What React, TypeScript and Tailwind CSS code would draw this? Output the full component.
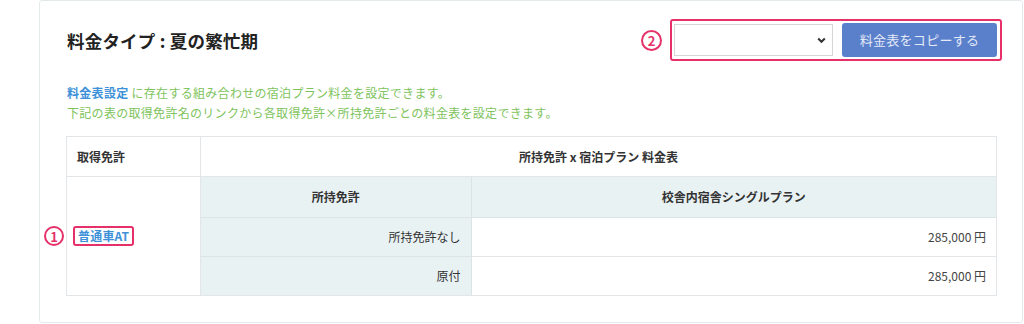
import React from "react";

const font = { fontFamily: '"Noto Sans CJK JP", "Noto Sans", "Liberation Sans", sans-serif' };

export default function App() {
  return (
    <div className="w-[1024px] h-[324px] bg-white overflow-hidden" style={font}>
      <div className="relative ml-[39px] w-[984px] h-[323px] border border-[#e4eaec] rounded-[3px] px-[26px] pt-[18px]">
        {/* header */}
        <div className="flex items-center justify-between h-[42px]">
          <h1 className="text-[17.5px] font-bold text-[#222] mt-[3px] ml-[1px] tracking-[0.2px]">料金タイプ : 夏の繁忙期</h1>
          <div className="flex items-center gap-[8px] -mr-[6px]">
            <span className="flex items-center justify-center w-[21px] h-[21px] rounded-full border-2 border-[#e5306a] text-[#e5306a] text-[13px] font-bold leading-none">2</span>
            <div className="flex items-center gap-[9px] h-[42px] border-2 border-[#e5306a] rounded-[3px] pl-[2px] pr-[3px]">
              <div className="relative w-[159px] h-[32px] border border-[#d6d6d6] bg-white">
                <svg className="absolute right-[6px] top-[12px]" width="9" height="7" viewBox="0 0 9 7">
                  <path d="M1.2 1.5 L4.5 4.8 L7.8 1.5" fill="none" stroke="#333" strokeWidth="2" />
                </svg>
              </div>
              <button className="w-[155px] h-[34px] rounded-[3px] bg-[#5a80cc] text-[13px] text-[#e3e9f6] tracking-[0.3px]">料金表をコピーする</button>
            </div>
          </div>
        </div>

        {/* description */}
        <div className="mt-[22px] text-[12px] leading-[20px] text-[#7ec35c] ml-[1px] tracking-[0.3px]">
          <p><span className="text-[#3d91d8] font-semibold">料金表設定</span> に存在する組み合わせの宿泊プラン料金を設定できます。</p>
          <p>下記の表の取得免許名のリンクから各取得免許×所持免許ごとの料金表を設定できます。</p>
        </div>

        {/* table */}
        <table className="mt-[13px] w-[931px] border-collapse text-[12px] text-[#333]">
          <thead>
            <tr className="h-[40px]">
              <th className="w-[134px] border border-[#e3e6e8] text-left font-semibold pl-[10px]">取得免許</th>
              <th className="border border-[#e3e6e8] font-semibold text-center">所持免許 x 宿泊プラン 料金表</th>
            </tr>
          </thead>
          <tbody>
            <tr>
              <td className="relative border border-[#e3e6e8] pl-[6px] align-middle">
                <span className="absolute -left-[23px] top-1/2 -translate-y-1/2 flex items-center justify-center w-[20px] h-[20px] rounded-full border-2 border-[#e5306a] text-[#e5306a] text-[13px] font-bold leading-none">1</span>
                <span className="inline-block border-2 border-[#e5306a] rounded-[3px] px-[3px] leading-[16px] text-[#3d91d8] font-semibold tracking-[0.2px]">普通車AT</span>
              </td>
              <td className="border border-[#e3e6e8] p-0">
                <table className="w-full border-collapse">
                  <tbody>
                    <tr className="h-[40px] bg-[#e9f2f3]">
                      <td className="w-[270px] border-r border-b border-[#dde4e6] text-center font-semibold">所持免許</td>
                      <td className="border-b border-[#dde4e6] text-center font-semibold">校舎内宿舎シングルプラン</td>
                    </tr>
                    <tr className="h-[39px]">
                      <td className="bg-[#e9f2f3] border-r border-b border-[#dde4e6] text-right pr-[10px]">所持免許なし</td>
                      <td className="border-b border-[#e3e6e8] text-right pr-[10px] text-[#444]">285,000 円</td>
                    </tr>
                    <tr className="h-[39px]">
                      <td className="bg-[#e9f2f3] border-r border-[#dde4e6] text-right pr-[10px]">原付</td>
                      <td className="text-right pr-[10px] text-[#444]">285,000 円</td>
                    </tr>
                  </tbody>
                </table>
              </td>
            </tr>
          </tbody>
        </table>
      </div>
    </div>
  );
}
